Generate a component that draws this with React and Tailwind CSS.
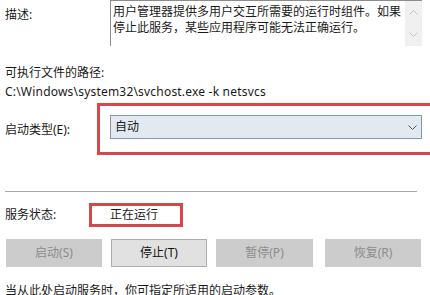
import React from 'react';

const font = "font-['Noto_Sans','Noto_Sans_CJK_SC',sans-serif]";

function Chevron({ className, up }) {
  return (
    <svg width="9" height="5" viewBox="0 0 9 5" className={className}>
      <path d={up ? 'M0.5 4.5 L4.5 0.5 L8.5 4.5' : 'M0.5 0.5 L4.5 4.5 L8.5 0.5'} fill="none" stroke="currentColor" strokeWidth="1" />
    </svg>
  );
}

export default function App() {
  const buttons = [
    { label: '启动(S)', enabled: false, cls: 'ml-[6px] w-[96px]' },
    { label: '停止(T)', enabled: true, cls: 'ml-[9px] w-[96px]' },
    { label: '暂停(P)', enabled: false, cls: 'ml-[9px] w-[97px]' },
    { label: '恢复(R)', enabled: false, cls: 'ml-[12px] w-[96px]' },
  ];

  return (
    <div className={`w-[430px] h-[295px] bg-white overflow-hidden text-[12px] leading-[16px] text-[#1a1a1a] ${font}`}>
      {/* 描述 */}
      <div className="flex h-[46px]">
        <div className="w-[110px] shrink-0 pl-[5px] pt-[7px]">描述:</div>
        <div className="w-[312px] shrink-0 flex border-l border-t border-[#8c8c8c]">
          <div className="flex-1 pl-[2px] pt-[3px]">
            用户管理器提供多用户交互所需要的运行时组件。如果停止此服务，某些应用程序可能无法正确运行。
          </div>
          <div className="w-[17px] bg-[#f0f0f0] flex flex-col items-center justify-between py-[9px] text-[#c2c2c2]">
            <Chevron up />
            <Chevron />
          </div>
        </div>
      </div>

      {/* 路径 */}
      <div className="mt-[19px] pl-[5px]">可执行文件的路径:</div>
      <div className="mt-[3px] pl-[5px] tracking-[0.2px]">C:\Windows\system32\svchost.exe -k netsvcs</div>

      {/* 启动类型 */}
      <div className="mt-[3px] flex items-center h-[52px]">
        <div className="w-[97px] shrink-0 pl-[5px] pt-[2px]">启动类型(E):</div>
        <div className="w-[340px] h-[52px] shrink-0 border-[3px] border-[#d8454b] pl-[10px] pt-[9px]">
          <div className="w-[312px] h-[24px] bg-[#e3e9f1] border border-[#8098b2] flex items-center justify-between pl-[4px] pr-[4px]">
            <span>自动</span>
            <Chevron className="text-[#555]" />
          </div>
        </div>
      </div>

      {/* 分隔线 */}
      <div className="mt-[36px] ml-[5px] w-[412px] h-px bg-[#a8a8a8]"></div>

      {/* 服务状态 */}
      <div className="mt-[11px] flex items-center h-[24px]">
        <div className="w-[89px] shrink-0 pl-[5px]">服务状态:</div>
        <div className="w-[94px] h-[24px] shrink-0 border-[3px] border-[#d8454b] pl-[18px] flex items-center">
          正在运行
        </div>
      </div>

      {/* 按钮 */}
      <div className="mt-[12px] flex h-[28px]">
        {buttons.map((b) => (
          <div
            key={b.label}
            className={`${b.cls} shrink-0 h-[28px] flex items-center justify-center ${
              b.enabled
                ? 'bg-[#e1e1e1] border border-[#adadad] text-[#111]'
                : 'bg-[#cccccc] text-[#8c8c8c]'
            }`}
          >
            {b.label}
          </div>
        ))}
      </div>

      {/* 说明 */}
      <div className="mt-[16px] pl-[5px] whitespace-nowrap">当从此处启动服务时，你可指定所适用的启动参数。</div>
    </div>
  );
}
